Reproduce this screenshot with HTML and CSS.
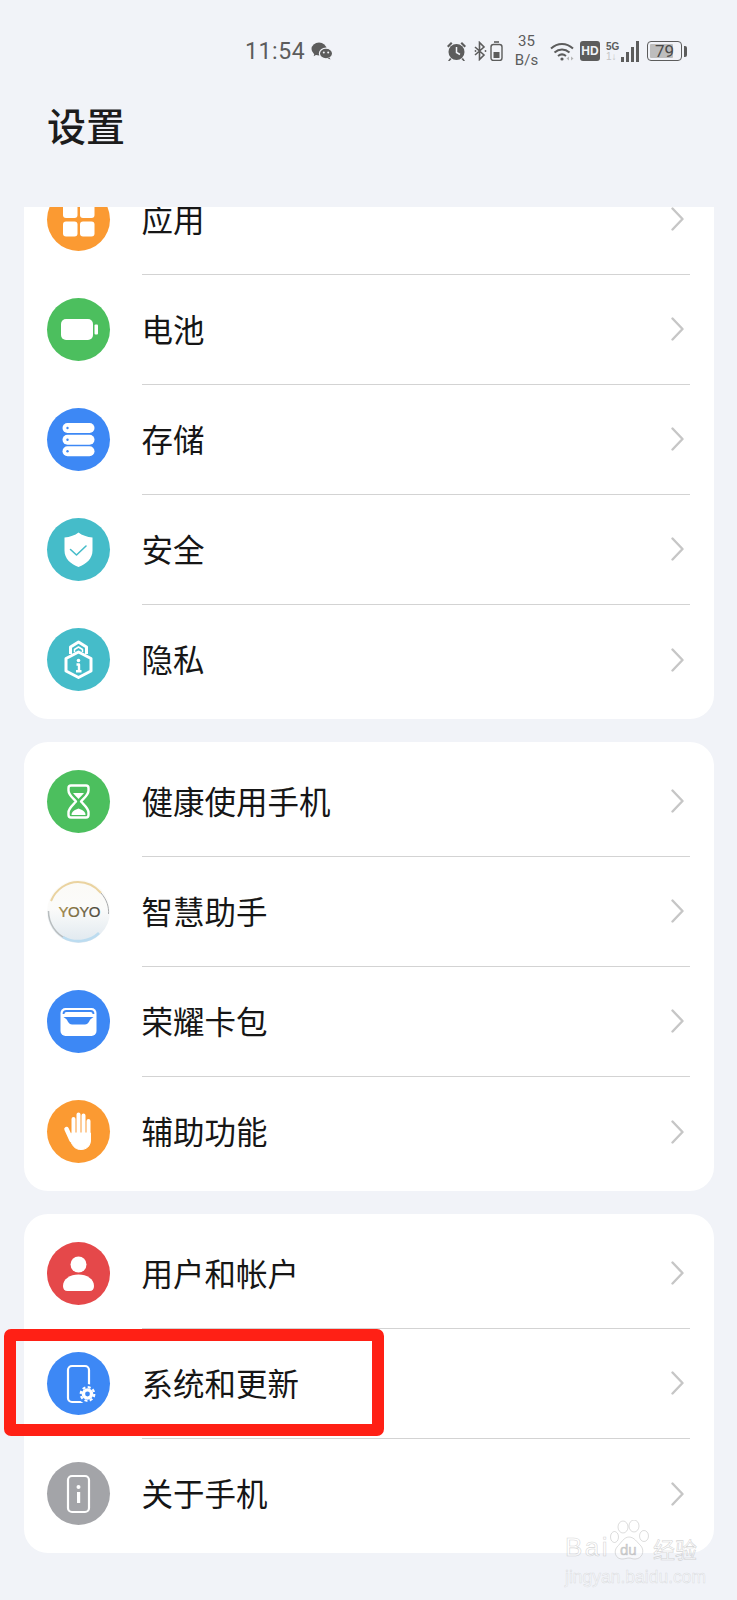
FILE: index.html
```html
<!DOCTYPE html>
<html lang="zh-CN">
<head>
    <meta charset="UTF-8">
    <meta name="viewport" content="width=device-width, initial-scale=1.0">
    <title>设置</title>
    <link rel="stylesheet" href="styles.css">
</head>
<body>
    <header class="header">
        <div class="status-bar">
            <span class="time">11:54</span>
            <svg class="st-wechat" viewBox="0 0 22 18" width="22" height="18" fill="#5c5c5c">
                <ellipse cx="8" cy="7" rx="7.5" ry="6.4"/>
                <path d="M3.5 11l-.8 3.2 3.6-2z"/>
                <ellipse cx="15" cy="11.5" rx="6.6" ry="5.4" stroke="#f1f3f8" stroke-width="1.2"/>
                <path d="M18.5 15.5l1 2-3-1.2z"/>
                <circle cx="12.8" cy="10.5" r="1" fill="#f1f3f8"/>
                <circle cx="17.2" cy="10.5" r="1" fill="#f1f3f8"/>
            </svg>
            <div class="status-right">
                <svg viewBox="0 0 21 21" width="21" height="21" fill="#5c5c5c">
                    <circle cx="10.5" cy="11" r="8"/>
                    <path d="M1 5l4-4 1.5 1.5-4 4zM20 5l-4-4-1.5 1.5 4 4zM4 17l-2 3h1.6l2-2zM17 17l2 3h-1.6l-2-2z"/>
                    <path d="M10.5 6v5.5l3.5 2" fill="none" stroke="#f1f3f8" stroke-width="1.5"/>
                </svg>
                <svg class="st-bt" viewBox="0 0 13 20" width="13" height="20" fill="none" stroke="#5c5c5c" stroke-width="1.6">
                    <path d="M1 6l9 8-4.5 4.5v-17L10 6l-9 8"/>
                    <circle cx="1.5" cy="10" r=".9" fill="#5c5c5c" stroke="none"/>
                    <circle cx="11.5" cy="10" r=".9" fill="#5c5c5c" stroke="none"/>
                </svg>
                <svg class="st-batt" viewBox="0 0 13 20" width="13" height="20" fill="none" stroke="#5c5c5c" stroke-width="1.4">
                    <rect x="1" y="3.5" width="11" height="16" rx="2.4"/>
                    <path d="M4 1h5" stroke-width="1.6"/>
                    <rect x="3.5" y="11" width="6" height="6" fill="#5c5c5c" stroke="none"/>
                </svg>
                <div class="speed"><span>35</span><span>B/s</span></div>
                <svg class="st-wifi" viewBox="0 0 25 20" width="25" height="20" fill="none" stroke="#5c5c5c" stroke-width="2">
                    <path d="M1 7.5c6.500-6 15.500-6 22 0"/>
                    <path d="M4.500 11.500c4.500-4 10.500-4 15 0"/>
                    <path d="M8 15c2.500-2 5.500-2 8 0"/>
                    <circle cx="12" cy="18" r="1.600" fill="#5c5c5c" stroke="none"/>
                    <path d="M19 15.500v4l-2.500-2z" fill="#b5b5b5" stroke="none"/>
                    <path d="M21 15.500v4l2.500-2z" fill="#b5b5b5" stroke="none"/>
                </svg>
                <span class="hd">HD</span>
                <div class="signal">
                    <div class="net"><span class="net-5g">5G</span><span class="net-1">1↓</span></div>
                    <div class="bars"><i class="bar1"></i><i class="bar2"></i><i class="bar3"></i><i class="bar4"></i></div>
                </div>
                <div class="battery">
                    <div class="battery-box"><div class="battery-fill" style="width: 79%"></div><span class="battery-num">79</span></div>
                    <i class="battery-tip"></i>
                </div>
            </div>
        </div>
        <h1 class="title">设置</h1>
    </header>

    <main class="list">
        <section class="card card-first">
            <div class="row">
                <div class="icon orange">
                    <svg viewBox="0 0 63 63" fill="#fff">
                        <rect x="16" y="15" width="14.500" height="15" rx="3"/>
                        <rect x="33" y="15" width="14.500" height="15" rx="3"/>
                        <rect x="16" y="33.500" width="14.500" height="15" rx="3"/>
                        <rect x="33" y="33.500" width="14.500" height="15" rx="3"/>
                    </svg>
                </div>
                <div class="row-body"><span class="label">应用</span><svg class="chevron" viewBox="0 0 13 24"><path d="M1.500 1.500L11.500 12 1.500 22.500"/></svg></div>
            </div>
            <div class="row">
                <div class="icon green">
                    <svg viewBox="0 0 63 63" fill="#fff">
                        <rect x="14" y="21" width="32" height="21" rx="5"/>
                        <rect x="47.500" y="26.500" width="3.500" height="10" rx="1"/>
                    </svg>
                </div>
                <div class="row-body"><span class="label">电池</span><svg class="chevron" viewBox="0 0 13 24"><path d="M1.500 1.500L11.500 12 1.500 22.500"/></svg></div>
            </div>
            <div class="row">
                <div class="icon blue">
                    <svg viewBox="0 0 63 63" fill="#fff">
                        <rect x="15.500" y="15" width="32" height="10" rx="5"/>
                        <rect x="15.500" y="26.700" width="32" height="10" rx="5"/>
                        <rect x="15.500" y="38.300" width="32" height="10" rx="5"/>
                        <circle cx="20.500" cy="20" r="1.200" fill="#3d88f5"/>
                        <circle cx="20.500" cy="31.700" r="1.200" fill="#3d88f5"/>
                        <circle cx="20.500" cy="43.300" r="1.200" fill="#3d88f5"/>
                    </svg>
                </div>
                <div class="row-body"><span class="label">存储</span><svg class="chevron" viewBox="0 0 13 24"><path d="M1.500 1.500L11.500 12 1.500 22.500"/></svg></div>
            </div>
            <div class="row">
                <div class="icon teal">
                    <svg viewBox="0 0 63 63">
                        <path d="M31.500 14.500c3.500 2.800 8.500 4.500 14 5v13c0 8-6 13.500-14 16.500-8-3-14-8.500-14-16.500v-13c5.500-.5 10.500-2.200 14-5z" fill="#fff"/>
                        <path d="M23.500 31.500l6 5.500 9.500-9" fill="none" stroke="#45bcc9" stroke-width="1.600" stroke-linecap="round" stroke-linejoin="round"/>
                    </svg>
                </div>
                <div class="row-body"><span class="label">安全</span><svg class="chevron" viewBox="0 0 13 24"><path d="M1.500 1.500L11.500 12 1.500 22.500"/></svg></div>
            </div>
            <div class="row">
                <div class="icon teal">
                    <svg viewBox="0 0 63 63" fill="none" stroke="#fff" stroke-width="3" stroke-linejoin="round">
                        <path d="M23.500 26v-7l8-5 8 5v7"/>
                        <path d="M27.500 24v-2.500l4-2.500 4 2.500v2.500" stroke-width="1.500"/>
                        <path d="M31.500 24l12.500 6.500v12.500l-12.500 6.500-12.500-6.500v-12.500z"/>
                        <path d="M29.500 36.500h2.500v6.500M29 43.200h5.500" stroke-width="2.400"/>
                        <circle cx="31.500" cy="32.500" r="1.800" fill="#fff" stroke="none"/>
                    </svg>
                </div>
                <div class="row-body row-last"><span class="label">隐私</span><svg class="chevron" viewBox="0 0 13 24"><path d="M1.500 1.500L11.500 12 1.500 22.500"/></svg></div>
            </div>
        </section>

        <section class="card">
            <div class="row">
                <div class="icon green">
                    <svg viewBox="0 0 63 63">
                        <path d="M24 15.500h15c1.500 0 2.500 1 2.500 2.500v2.500c0 4.500-4.500 7.500-7.500 11 3 3.500 7.500 6.500 7.500 11V45c0 1.500-1 2.500-2.500 2.500H24c-1.500 0-2.500-1-2.500-2.500v-2.500c0-4.500 4.500-7.500 7.500-11-3-3.500-7.500-6.500-7.500-11V18c0-1.500 1-2.500 2.500-2.500z" fill="none" stroke="#fff" stroke-width="2.400" stroke-linejoin="round"/>
                        <path d="M26 23h11c-1.500 2.200-3.800 4-5.500 6-1.700-2-4-3.800-5.500-6z" fill="#fff"/>
                        <path d="M24.500 45c0-4 4-5.500 7-6.500 3 1 7 2.500 7 6.500z" fill="#fff"/>
                    </svg>
                </div>
                <div class="row-body"><span class="label">健康使用手机</span><svg class="chevron" viewBox="0 0 13 24"><path d="M1.500 1.500L11.500 12 1.500 22.500"/></svg></div>
            </div>
            <div class="row">
                <div class="icon yoyo">
                    <svg viewBox="0 0 63 63" fill="none">
                        <defs>
                            <linearGradient id="yoyoText" x1="0" y1="0" x2="1" y2="0">
                                <stop offset="0" stop-color="#b3923c"/>
                                <stop offset="1" stop-color="#3f3f3d"/>
                            </linearGradient>
                        </defs>
                        <path d="M1.500 31A30 30 0 0 0 20 59" stroke="#b8bdbf" stroke-width="1.500"/>
                        <path d="M4 21C9 9 20 2 31 2c10 0 17 4 23 11" stroke="#ead3a0" stroke-width="2"/>
                        <path d="M54 13c6 7 8 14 7.500 21" stroke="#a9abad" stroke-width="1"/>
                        <path d="M16 57c10 6 26 6 36-4" stroke="#bcdcf0" stroke-width="2.600"/>
                        <text class="yoyo-text" x="11.500" y="36.500" textLength="42" fill="url(#yoyoText)">YOYO</text>
                    </svg>
                </div>
                <div class="row-body"><span class="label">智慧助手</span><svg class="chevron" viewBox="0 0 13 24"><path d="M1.500 1.500L11.500 12 1.500 22.500"/></svg></div>
            </div>
            <div class="row">
                <div class="icon blue">
                    <svg viewBox="0 0 63 63">
                        <rect x="13.500" y="18" width="36" height="28" rx="5" fill="#fff"/>
                        <path d="M16.500 24c0-2 1.500-3 3-3h24c1.500 0 3 1 3 3" fill="none" stroke="#3d88f5" stroke-width="1.800"/>
                        <path d="M16.500 27h30l-2 1.500c-1.500 1-2 2.500-3 4-.8 1.200-2 2-3.500 2H25c-1.500 0-2.700-.8-3.500-2-1-1.500-1.500-3-3-4z" fill="#3d88f5"/>
                    </svg>
                </div>
                <div class="row-body"><span class="label">荣耀卡包</span><svg class="chevron" viewBox="0 0 13 24"><path d="M1.500 1.500L11.500 12 1.500 22.500"/></svg></div>
            </div>
            <div class="row">
                <div class="icon orange">
                    <svg viewBox="0 0 63 63" fill="#fff" stroke="#fff" stroke-linecap="round">
                        <path d="M26.500 35V19M31.500 35V14.500M36.500 35V15.500M41.500 36V21" fill="none" stroke-width="4"/>
                        <path d="M19.500 29l5 11" fill="none" stroke-width="4.500"/>
                        <path d="M25 33h18.500v7c0 6-4 9.500-9.500 9.500-5 0-7.500-2.500-9.500-6.500l-2-6z" stroke-width="1"/>
                    </svg>
                </div>
                <div class="row-body row-last"><span class="label">辅助功能</span><svg class="chevron" viewBox="0 0 13 24"><path d="M1.500 1.500L11.500 12 1.500 22.500"/></svg></div>
            </div>
        </section>

        <section class="card">
            <div class="row">
                <div class="icon red">
                    <svg viewBox="0 0 63 63" fill="#fff">
                        <circle cx="31.500" cy="22.500" r="8"/>
                        <path d="M16 44c0-7 7-11.500 15.500-11.500S47 37 47 44c0 3-1.500 5-4.500 5h-22c-3 0-4.500-2-4.500-5z"/>
                    </svg>
                </div>
                <div class="row-body"><span class="label">用户和帐户</span><svg class="chevron" viewBox="0 0 13 24"><path d="M1.500 1.500L11.500 12 1.500 22.500"/></svg></div>
            </div>
            <div class="row row-marked">
                <div class="icon blue">
                    <svg viewBox="0 0 63 63">
                        <rect x="21" y="14" width="21" height="36" rx="4" fill="none" stroke="#fff" stroke-width="2.200"/>
                        <circle cx="40.500" cy="42" r="10" fill="#3d88f5"/>
                        <circle cx="40.500" cy="42" r="5.800" fill="#fff"/>
                        <circle cx="40.500" cy="42" r="6.800" fill="none" stroke="#fff" stroke-width="2.200" stroke-dasharray="3 2.340"/>
                        <circle cx="40.500" cy="42" r="2.400" fill="#3d88f5"/>
                    </svg>
                </div>
                <div class="row-body"><span class="label">系统和更新</span><svg class="chevron" viewBox="0 0 13 24"><path d="M1.500 1.500L11.500 12 1.500 22.500"/></svg></div>
                <div class="mark"></div>
            </div>
            <div class="row">
                <div class="icon gray">
                    <svg viewBox="0 0 63 63">
                        <rect x="21" y="14" width="21" height="36" rx="4" fill="none" stroke="#fff" stroke-width="2.200"/>
                        <circle cx="31.500" cy="25" r="2" fill="#fff"/>
                        <rect x="30" y="30" width="3.200" height="11" fill="#fff"/>
                    </svg>
                </div>
                <div class="row-body row-last"><span class="label">关于手机</span><svg class="chevron" viewBox="0 0 13 24"><path d="M1.500 1.500L11.500 12 1.500 22.500"/></svg></div>
            </div>
        </section>
    </main>

    <div class="watermark">
        <div class="wm-top">
            <span class="wm-bai">Bai</span>
            <div class="wm-paw">
                <svg viewBox="0 0 40 42" width="40" height="42" fill="rgba(255,255,255,.45)" stroke="rgba(170,170,170,.5)" stroke-width=".8">
                    <ellipse cx="13" cy="7" rx="5" ry="6"/>
                    <ellipse cx="24" cy="6" rx="5" ry="6"/>
                    <ellipse cx="4.500" cy="17" rx="4" ry="5.500"/>
                    <ellipse cx="34" cy="16" rx="4.500" ry="5.500"/>
                    <path d="M19 17c5 0 8 5 12 9 4 5 1 13-6 13-3 0-4-1-6-1s-4 1-7 1c-6 0-9-7-5-12 4-4 7-10 12-10z"/>
                </svg>
                <span class="wm-du">du</span>
            </div>
            <span class="wm-jy">经验</span>
        </div>
        <div class="wm-url">jingyan.baidu.com</div>
    </div>
</body>
</html>
```

FILE: styles.css
```css
* { margin: 0; padding: 0; box-sizing: border-box; }
html, body { height: 1600px; overflow: hidden; }
body { position: relative; background-color: #f1f3f8; color: #161616; font-family: "Noto Sans CJK SC", "Noto Sans", sans-serif; }

.header { height: 207px; padding-top: 31px; }
.status-bar { display: flex; align-items: center; height: 40px; padding: 0 50px 0 245px; }
.time { font-family: Roboto, sans-serif; font-size: 23px; letter-spacing: .6px; color: #5c5c5c; }
.st-wechat { margin-left: 6px; }
.status-right { display: flex; align-items: center; margin-left: auto; }
.st-bt { margin-left: 7px; }
.st-batt { margin-left: 3px; }
.speed { display: flex; flex-direction: column; align-items: center; width: 25px; margin-left: 11px; font-family: Roboto, sans-serif; font-size: 15px; line-height: 19px; color: #5c5c5c; }
.st-wifi { margin-left: 11px; }
.hd { width: 20px; height: 20px; margin-left: 5px; border-radius: 3px; background: #5c5c5c; color: #f1f3f8; font-family: "Liberation Sans", sans-serif; font-size: 12px; font-weight: 700; line-height: 20px; text-align: center; }
.signal { display: flex; align-items: flex-end; margin-left: 6px; }
.net { display: flex; flex-direction: column; width: 14px; font-family: "Liberation Sans", sans-serif; font-size: 10px; line-height: 10px; font-weight: 700; color: #5c5c5c; }
.net-1 { color: #c4c4c4; font-weight: 400; }
.bars { display: flex; align-items: flex-end; gap: 2px; height: 21px; margin-left: 1px; }
.bars i { display: block; width: 3px; background: #5c5c5c; }
.bar1 { height: 5px; }
.bar2 { height: 10px; }
.bar3 { height: 15px; }
.bar4 { height: 21px; }
.battery { display: flex; align-items: center; margin-left: 8px; }
.battery-box { position: relative; width: 35px; height: 20px; padding: 2px; border: 1.500px solid #5c5c5c; border-radius: 4px; }
.battery-fill { height: 100%; background: #bdbdbd; border-radius: 1px; }
.battery-num { position: absolute; left: 0; right: 0; top: -1px; font-family: Roboto, sans-serif; font-size: 17px; line-height: 20px; text-align: center; color: #4a4a4a; }
.battery-tip { display: block; width: 3px; height: 11px; margin-left: 2px; background: #5c5c5c; border-radius: 0 2px 2px 0; }
.title { margin-top: 25px; padding-left: 47px; font-size: 39px; font-weight: 500; line-height: 56px; color: #1c1c1c; }

.list { height: 1393px; overflow: hidden; }
.card { margin: 0 23.500px 23px; padding: 4px 0 5px; background: #fff; border-radius: 24px; }
.card-first { margin-top: -47px; }
.row { position: relative; display: flex; align-items: center; gap: 31.500px; height: 110px; padding-left: 23.500px; }
.row-body { flex: 1; align-self: stretch; display: flex; align-items: center; justify-content: space-between; margin-right: 23.500px; margin-bottom: -1px; padding-right: 6px; border-bottom: 1px solid #d3d3d3; }
.row-last { border-bottom: none; }
.label { margin-bottom: 3px; font-size: 31.500px; line-height: 40px; }
.chevron { width: 13px; height: 24px; fill: none; stroke: #c6c6c6; stroke-width: 2.400; stroke-linecap: round; stroke-linejoin: round; }

.icon { flex: none; width: 63px; height: 63px; border-radius: 50%; }
.icon svg { display: block; width: 63px; height: 63px; }
.orange { background: #fb9a32; }
.green { background: #4cbf5e; }
.blue { background: #3d88f5; }
.teal { background: #45bcc9; }
.red { background: #e5484a; }
.gray { background: #a3a4a8; }
.yoyo { background: linear-gradient(#fbfaf6 0%, #fbfbfa 45%, #dfe8ef 100%); }
.yoyo-text { font-family: "Liberation Sans", sans-serif; font-size: 15px; stroke: #6b6650; stroke-width: .2px; }

.mark { position: absolute; left: -19.500px; top: 1px; width: 380px; height: 107px; border: 12.500px solid #ff2015; border-radius: 7px; }

.watermark { position: absolute; left: 565px; top: 1520px; width: 134px; color: rgba(255, 255, 255, .45); -webkit-text-stroke: .6px rgba(170, 170, 170, .5); }
.wm-top { display: flex; align-items: flex-end; height: 42px; }
.wm-bai { width: 45px; font-family: "Liberation Sans", sans-serif; font-size: 26px; line-height: 30px; letter-spacing: 2.500px; }
.wm-paw { position: relative; width: 40px; height: 42px; }
.wm-du { position: absolute; left: 10px; top: 22px; font-family: "Liberation Sans", sans-serif; font-size: 15px; line-height: 16px; color: rgba(170, 170, 170, .5); }
.wm-jy { width: 46px; margin-left: 3px; font-size: 22px; line-height: 28px; }
.wm-url { margin-top: 7px; font-family: "Liberation Sans", sans-serif; font-size: 17.500px; line-height: 16px; white-space: nowrap; color: rgba(255, 255, 255, .3); -webkit-text-stroke: .5px rgba(170, 170, 170, .35); }
```
